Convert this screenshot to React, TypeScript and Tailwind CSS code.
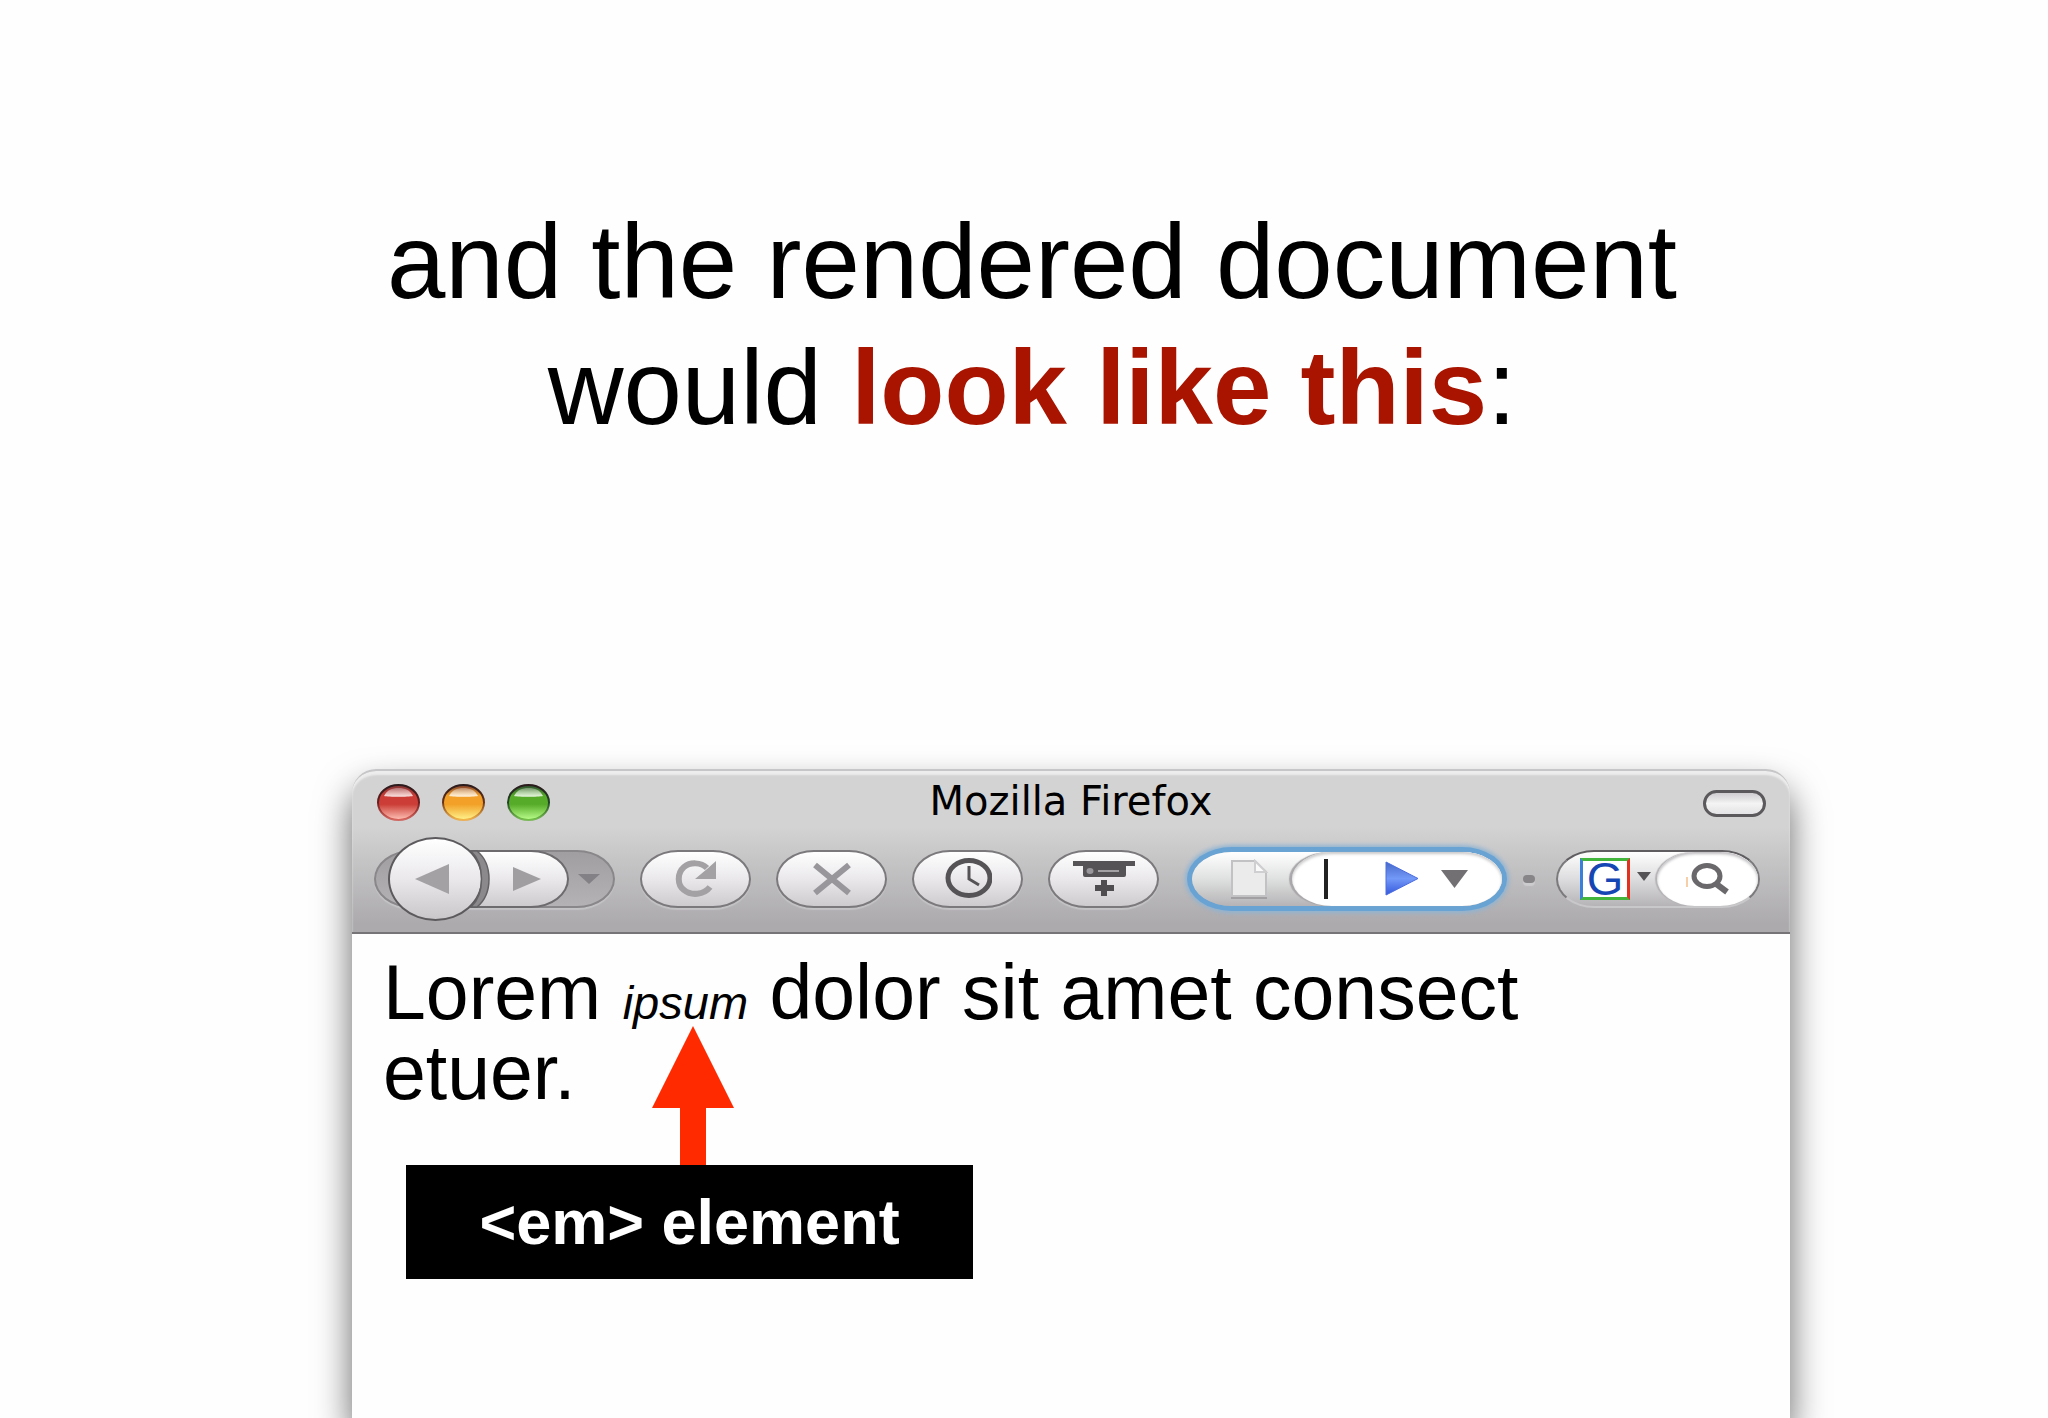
import { useState } from 'react';
import type { ReactNode } from 'react';

const lights = [
  { name: 'Close', rim: '#6a2020', mid: '#cb3d36', low: '#ffc4b8', cap: '#7d3434' },
  { name: 'Minimize', rim: '#6c3418', mid: '#f2a027', low: '#fff58e', cap: '#7a3a2c' },
  { name: 'Zoom', rim: '#22452a', mid: '#56ab28', low: '#bcff8e', cap: '#2a4a30' },
];

function TrafficLight({ light }: { light: (typeof lights)[number] }) {
  const id = `light-${light.name}`;
  return (
    <button type="button" aria-label={light.name} className="block">
      <svg width="45" height="39" viewBox="0 0 45 39">
        <defs>
          <linearGradient id={id} x1="0" y1="0" x2="0" y2="1">
            <stop offset="0" stopColor={light.cap} />
            <stop offset="0.3" stopColor={light.mid} />
            <stop offset="0.55" stopColor={light.mid} />
            <stop offset="1" stopColor={light.low} />
          </linearGradient>
          <linearGradient id={`${id}-shine`} x1="0" y1="0" x2="0" y2="1">
            <stop offset="0" stopColor="#fff" stopOpacity="0.3" />
            <stop offset="1" stopColor="#fff" stopOpacity="0.85" />
          </linearGradient>
          <linearGradient id={`${id}-rim`} x1="0" y1="0" x2="0" y2="1">
            <stop offset="0" stopColor="#2a1a1c" />
            <stop offset="0.5" stopColor={light.rim} />
            <stop offset="1" stopColor={light.mid} stopOpacity="0.7" />
          </linearGradient>
        </defs>
        <ellipse cx="22.5" cy="18.5" rx="20.5" ry="17.5" fill={`url(#${id})`} stroke={`url(#${id}-rim)`} strokeWidth="2" />
        <path d="M8 12 C11 6 16 4 22.5 4 C29 4 34 6 37 12 C32 13 13 13 8 12Z" fill={`url(#${id}-shine)`} />
      </svg>
    </button>
  );
}

function ToolButton({ label, children }: { label: string; children: ReactNode }) {
  return (
    <button
      type="button"
      aria-label={label}
      className="flex h-[58px] w-[111px] shrink-0 items-center justify-center rounded-[38px/29px] border-2 border-[#7b797c] bg-linear-to-b from-white via-[#eae8eb] to-[#cdcbce] shadow-[0_2px_1px_#c4c3c5]"
    >
      {children}
    </button>
  );
}

function HistoryButtons() {
  return (
    <div className="relative flex h-[58px] w-[241px] shrink-0 items-center rounded-[38px/29px] border-2 border-[#89878a] bg-linear-to-b from-[#a09ea1] to-[#b4b2b5] shadow-[0_2px_1px_#c4c3c5]">
      <button
        type="button"
        aria-label="Forward"
        className="ml-16 flex h-[58px] w-[129px] shrink-0 items-center justify-end rounded-r-[38px_29px] border-2 border-[#6d6b6e] bg-linear-to-b from-white via-[#eae8eb] to-[#cdcbce] pr-[26px]"
      >
        <svg width="28" height="24" viewBox="0 0 28 24">
          <path d="M0 0 L28 12 L0 24Z" fill="#a09ea1" />
        </svg>
      </button>
      <button type="button" aria-label="Recent pages" className="flex flex-1 justify-center pr-1">
        <svg width="22" height="10" viewBox="0 0 22 10">
          <path d="M0 0 H22 L11 10Z" fill="#838185" />
        </svg>
      </button>
      {/* round back button sits over the pill */}
      <button
        type="button"
        aria-label="Back"
        className="absolute top-1/2 left-3 flex h-[84px] w-[95px] -translate-y-1/2 items-center justify-center rounded-[50%] border-2 border-[#5c5a5d] bg-linear-to-b from-white via-[#eae8eb] to-[#c9c7ca] pr-2"
      >
        <svg width="34" height="30" viewBox="0 0 34 30">
          <path d="M34 0 L0 15 L34 30Z" fill="#a3a1a4" />
        </svg>
      </button>
      {/* shaded rim between back and forward */}
      <svg width="22" height="58" viewBox="0 0 22 58" className="pointer-events-none absolute -top-0.5 left-[95px]">
        <path d="M0 1 C14 14 14 44 0 57 H6 C22 44 22 14 6 1Z" fill="#8b898c" stroke="#636164" strokeWidth="1.5" />
      </svg>
    </div>
  );
}

function LocationBar() {
  const [url, setUrl] = useState('');
  return (
    <form
      onSubmit={(e) => e.preventDefault()}
      className="ml-2 flex h-[54px] min-w-0 flex-1 items-center rounded-[40px/27px] bg-linear-to-b from-white via-[#dfe1e0] to-[#b5b3b6] shadow-[0_0_0_5px_#69a3d4,0_0_4px_7px_#8fb4d3]"
    >
      <svg width="38" height="40" viewBox="0 0 38 40" className="ml-[38px] shrink-0">
        <path d="M2 2 H25 L36 13 V37 H2Z" fill="#ebebeb" stroke="#c2c1c3" strokeWidth="2" />
        <path d="M25 2 V13 H36Z" fill="#fafafa" stroke="#cfced0" strokeWidth="2" />
        <path d="M1 39 H37" stroke="#a2a0a3" strokeWidth="2" />
      </svg>
      <div className="ml-6 flex h-full min-w-0 flex-1 items-center rounded-[40px/27px] bg-white pr-[34px] pl-8 shadow-[-3px_0_1px_#a9a7aa,inset_0_2px_3px_#c9c8ca]">
        <span className="h-10 w-1 shrink-0 bg-[#222]" />
        <input
          type="text"
          aria-label="Location"
          value={url}
          onChange={(e) => setUrl(e.target.value)}
          className="h-10 w-0 min-w-0 flex-1 bg-transparent text-3xl outline-none"
        />
        <button type="submit" aria-label="Go" className="shrink-0">
          <svg width="34" height="35" viewBox="0 0 34 35">
            <defs>
              <linearGradient id="go" x1="0" y1="0" x2="0" y2="1">
                <stop offset="0" stopColor="#4468c8" />
                <stop offset="0.5" stopColor="#7399f8" />
                <stop offset="1" stopColor="#3558dc" />
              </linearGradient>
            </defs>
            <path d="M1 1 L33 17.5 L1 34Z" fill="url(#go)" stroke="#4a6ce0" strokeWidth="1" />
          </svg>
        </button>
        <button type="button" aria-label="Show history" className="ml-[22px] shrink-0">
          <svg width="27" height="18" viewBox="0 0 27 18">
            <path d="M0 0 H27 L13.500 18Z" fill="#727073" />
          </svg>
        </button>
      </div>
    </form>
  );
}

function SearchBar() {
  return (
    <div className="flex h-[58px] w-[204px] shrink-0 items-center rounded-[38px/29px] border-2 border-[#7b797c] border-t-[#5f5d60] border-b-[#c8c7c9] bg-linear-to-b from-white via-[#dddcde] to-[#b5b3b6]">
      <button type="button" aria-label="Search engine" className="ml-[22px] flex shrink-0 items-center gap-[7px]">
        <span className="flex h-[42px] w-[50px] items-center justify-center border-3 border-t-[#42b53c] border-r-[#e0321e] border-b-[#42b53c] border-l-[#3c7fd8] bg-white text-[47px] leading-none text-[#1646b4]">
          G
        </span>
        <svg width="14" height="9" viewBox="0 0 14 9" className="mb-1">
          <path d="M0 0 H14 L7 9Z" fill="#555356" />
        </svg>
      </button>
      <button
        type="submit"
        aria-label="Search"
        className="ml-auto flex h-[54px] w-[101px] items-center justify-center rounded-[38px/27px] bg-white shadow-[-2px_0_1px_#b5b3b6,inset_0_2px_3px_#bdbbbe]"
      >
        <svg width="46" height="36" viewBox="0 0 46 36">
          <path d="M2 16 V26" stroke="#f6cfa8" strokeWidth="2" />
          <ellipse cx="22" cy="15" rx="13" ry="10.500" fill="none" stroke="#6a686b" strokeWidth="5" />
          <path d="M30 22 L42 31" stroke="#6a686b" strokeWidth="6" />
        </svg>
      </button>
    </div>
  );
}

function BrowserWindow() {
  return (
    <section className="flex flex-1 flex-col rounded-t-3xl bg-[#fefefe] shadow-[0_20px_36px_rgba(0,0,0,0.6)]">
      <header className="rounded-t-3xl border-t-2 border-b-2 border-t-[#c6c5c7] border-b-[#767477] bg-linear-to-b from-[#d3d3d3] from-35% to-[#acaaad] to-95% px-[22px] pb-2.5 shadow-[inset_0_4px_2px_#ededed]">
        <div className="grid h-16 grid-cols-[1fr_auto_1fr] items-center px-0.5">
          <div className="flex items-center gap-5">
            {lights.map((light) => (
              <TrafficLight key={light.name} light={light} />
            ))}
          </div>
          <h2 className="pb-1 font-['DejaVu_Sans',sans-serif] text-[40px] leading-[44px] text-black">Mozilla Firefox</h2>
          <button
            type="button"
            aria-label="Toggle toolbar"
            className="h-[27px] w-[63px] justify-self-end rounded-full border-3 border-[#5b595c] bg-linear-to-b from-[#cfcdd0] via-[#f4f4f4] to-[#e4e3e5]"
          />
        </div>

        <div className="flex h-[87px] items-center gap-[25px] pr-2">
          <HistoryButtons />
          <ToolButton label="Reload">
            <svg width="44" height="38" viewBox="0 0 44 38">
              <path d="M33 8 C27 2 16 2 10 7 C3 13 3 25 10 30 C17 36 30 35 36 27" fill="none" stroke="#a3a1a4" strokeWidth="6" />
              <path d="M42 1 V19 H21 L33 9Z" fill="#a3a1a4" />
            </svg>
          </ToolButton>
          <ToolButton label="Stop">
            <svg width="40" height="34" viewBox="0 0 40 34">
              <path d="M3 3 L37 31 M37 3 L3 31" stroke="#98969a" strokeWidth="6" />
            </svg>
          </ToolButton>
          <ToolButton label="History">
            <svg width="48" height="42" viewBox="0 0 48 42">
              <ellipse cx="25" cy="20" rx="21" ry="17.500" fill="none" stroke="#555356" strokeWidth="5" />
              <path d="M25 8 V21 L35 27" fill="none" stroke="#555356" strokeWidth="3" />
            </svg>
          </ToolButton>
          <ToolButton label="New tab">
            <svg width="62" height="36" viewBox="0 0 62 36">
              <path d="M0 0 H62 V5 H53 V14 Q53 16 51 16 H12 Q10 16 10 14 V5 H0Z" fill="#555356" />
              <ellipse cx="17" cy="10" rx="3.500" ry="3" fill="#98969a" />
              <path d="M25 10 H46" stroke="#a3a1a4" strokeWidth="2" />
              <path d="M31 19 V35 M22 27 H41" stroke="#4f4d50" strokeWidth="6" />
            </svg>
          </ToolButton>
          <div className="flex min-w-0 flex-1 items-center gap-[21px]">
            <LocationBar />
            <span className="h-2 w-3 shrink-0 rounded-full bg-[#878588] shadow-[0_3px_1px_#cccbcd]" />
            <SearchBar />
          </div>
        </div>
      </header>

      <div className="relative flex-1 pt-[18px] pr-20 pl-[31px]">
        <p className="text-[77px] leading-[80px] text-black">
          Lorem <em className="text-[47px] leading-none">ipsum</em> dolor sit amet consect etuer.
        </p>
        {/* callout pointing up at the emphasised word */}
        <div className="absolute top-[92px] left-[54px] flex w-[567px] flex-col items-center">
          <svg width="88" height="139" viewBox="0 0 88 139">
            <path d="M47 0 L88 82 H60 V139 H34 V82 H6Z" fill="#ff2a00" />
          </svg>
          <div className="w-full bg-black py-5 text-center text-[63px] leading-[74px] font-bold text-white">
            &lt;em&gt; element
          </div>
        </div>
      </div>
    </section>
  );
}

export default function App() {
  return (
    <main className="flex min-h-screen flex-col overflow-hidden bg-[#fefefe] pt-[199px] font-['Liberation_Sans',Arial,sans-serif]">
      <h1 className="pl-4 text-center text-[105px] leading-[126px] text-black">
        and the rendered document
        <br />
        would <strong className="font-bold text-[#a81400]">look like this</strong>:
      </h1>
      <div className="mt-[318px] flex flex-1 flex-col pr-[258px] pl-[352px]">
        <BrowserWindow />
      </div>
    </main>
  );
}
